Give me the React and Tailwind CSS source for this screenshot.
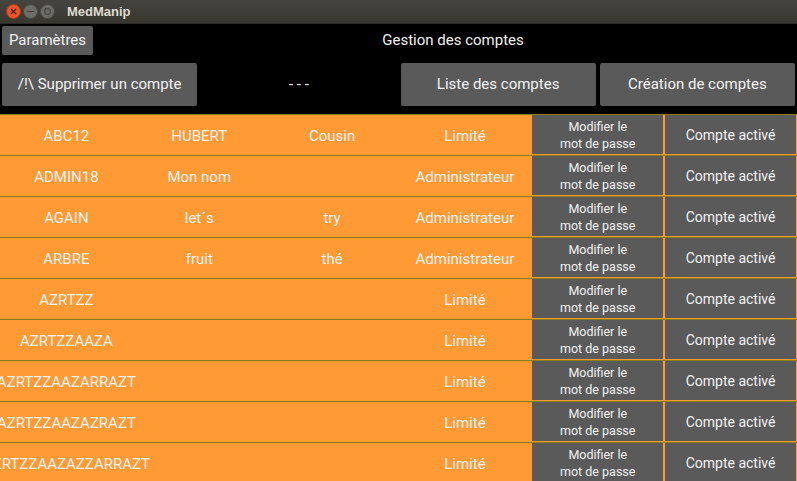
import { X, Minus, Square } from 'lucide-react';

const rows = [
  ['ABC12', 'HUBERT', 'Cousin', 'Limité'],
  ['ADMIN18', 'Mon nom', '', 'Administrateur'],
  ['AGAIN', 'let´s', 'try', 'Administrateur'],
  ['ARBRE', 'fruit', 'thé', 'Administrateur'],
  ['AZRTZZ', '', '', 'Limité'],
  ['AZRTZZAAZA', '', '', 'Limité'],
  ['AZRTZZAAZARRAZT', '', '', 'Limité'],
  ['AZRTZZAAZAZRAZT', '', '', 'Limité'],
  ['AZRTZZAAZAZZARRAZT', '', '', 'Limité'],
];

export default function App() {
  return (
    <div className="w-[797px] h-[481px] overflow-hidden bg-black font-['Roboto',sans-serif] text-[#f2f2f2]">
      {/* Title bar */}
      <div className="h-[24px] flex items-center bg-gradient-to-b from-[#45443f] to-[#38372f] border-b border-[#2a2925]">
        <div className="flex items-center gap-[2px] pl-[6px]">
          <div className="w-[15px] h-[15px] rounded-full bg-[#e9552c] border border-[#a63a1a] flex items-center justify-center">
            <X className="w-[9px] h-[9px] text-[#4a1a0a]" strokeWidth={3} />
          </div>
          <div className="w-[15px] h-[15px] rounded-full bg-[#6d6c67] border border-[#4a4945] flex items-center justify-center">
            <Minus className="w-[9px] h-[9px] text-[#3a3935]" strokeWidth={3} />
          </div>
          <div className="w-[15px] h-[15px] rounded-full bg-[#6d6c67] border border-[#4a4945] flex items-center justify-center">
            <Square className="w-[7px] h-[7px] text-[#3a3935]" strokeWidth={3} />
          </div>
        </div>
        <span className="ml-[12px] font-['Liberation_Sans',sans-serif] font-bold text-[13px] text-[#dfdbd2]">MedManip</span>
      </div>

      {/* Header */}
      <div className="flex items-center h-[31px] pt-[1px]">
        <button className="ml-[2px] h-[29px] w-[91px] rounded-[2px] bg-[#5a5a5a] text-[15px] text-[#f2f2f2]">Paramètres</button>
        <div className="flex-1 text-center pl-[16px] text-[15px]">Gestion des comptes</div>
      </div>

      <div className="grid grid-cols-4 h-[59px] pt-[8px] pb-[8px]">
        <button className="mx-[2px] rounded-[2px] bg-[#5a5a5a] text-[15px]">/!\ Supprimer un compte</button>
        <div className="flex items-center justify-center text-[15px]">- - -</div>
        <button className="mx-[2px] rounded-[2px] bg-[#5a5a5a] text-[15px]">Liste des comptes</button>
        <button className="mx-[2px] rounded-[2px] bg-[#5a5a5a] text-[15px]">Création de comptes</button>
      </div>

      {/* Accounts table */}
      <div className="bg-[#ff9a35]">
        {rows.map((r, i) => (
          <div key={i} className="grid grid-cols-6 h-[41px] border-t border-[#8a7d12] text-[15px]">
            {r.map((c, j) => (
              <div key={j} className="flex items-center justify-center whitespace-nowrap pt-[2px]">{c}</div>
            ))}
            <div className="flex p-[1px] -mt-px">
              <div className="flex-1 bg-[#5a5a5a] flex flex-col items-center justify-center text-[12.5px] leading-[17px] pt-[1px]">
                <span>Modifier le</span>
                <span>mot de passe</span>
              </div>
            </div>
            <div className="flex p-[1px] -mt-px">
              <div className="flex-1 bg-[#5a5a5a] flex items-center justify-center text-[14px] pt-[1px]">Compte activé</div>
            </div>
          </div>
        ))}
      </div>
    </div>
  );
}
